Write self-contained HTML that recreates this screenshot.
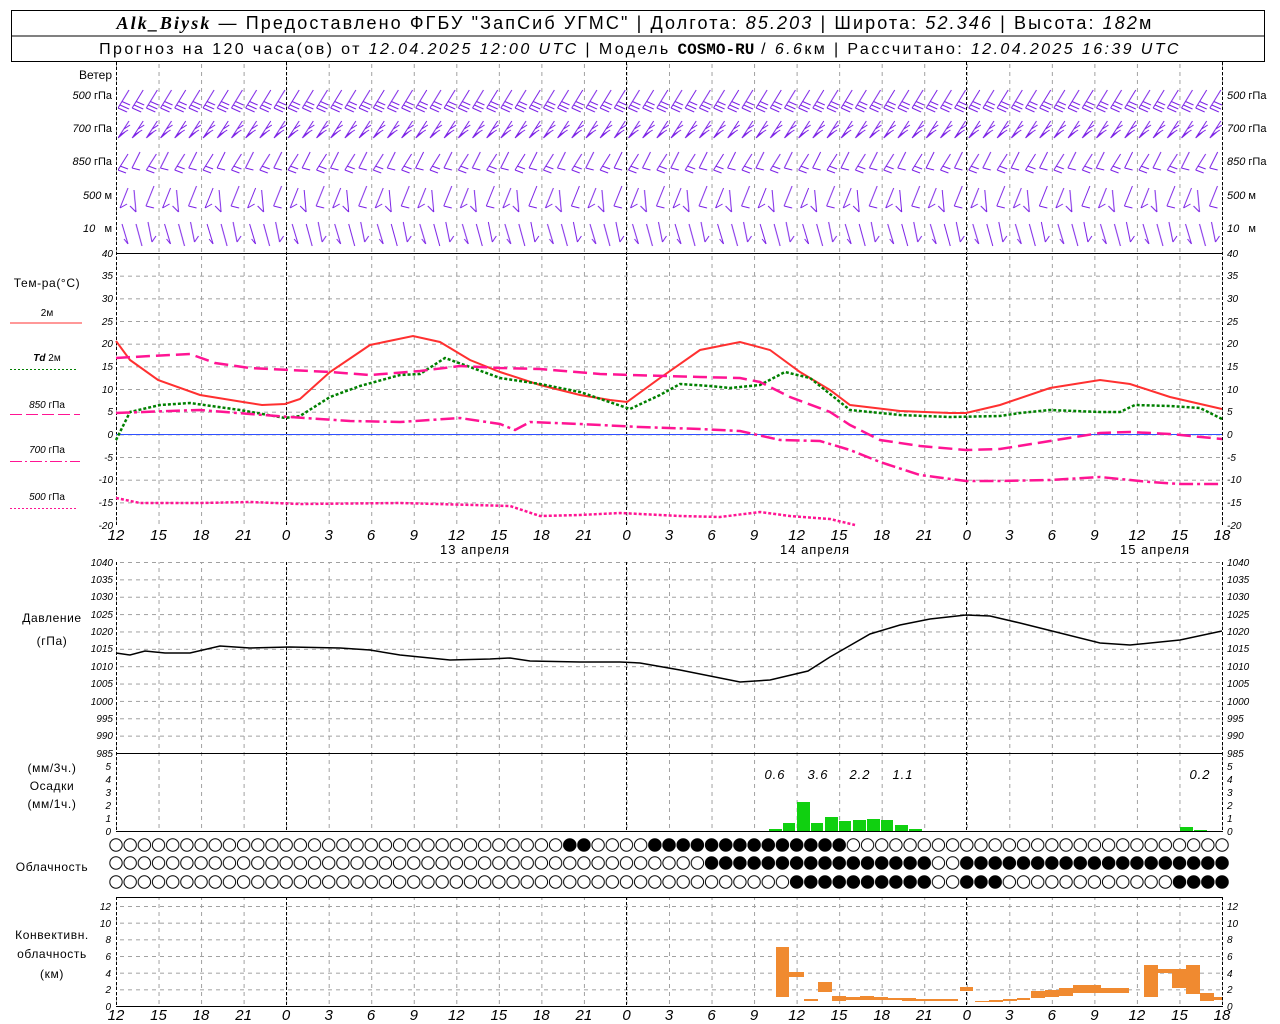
<!DOCTYPE html>
<html><head><meta charset="utf-8"><style>
html,body{margin:0;padding:0;background:#fff;width:1280px;height:1024px;overflow:hidden}
svg{display:block}
text{font-family:"Liberation Sans",sans-serif;fill:#000}
.ax{font-size:10px;font-style:italic}
.xl{font-size:15px;font-style:italic}
.lb{font-size:12px;letter-spacing:0.6px}
</style></head><body>
<svg width="1280" height="1024" viewBox="0 0 1280 1024" xmlns="http://www.w3.org/2000/svg">
<defs>
<pattern id="vg" x="116" y="0" width="42.538" height="8" patternUnits="userSpaceOnUse"><line x1="0.5" y1="0" x2="0.5" y2="4" stroke="#a0a0a0"/></pattern>
<pattern id="ht" x="0" y="253" width="8" height="22.67" patternUnits="userSpaceOnUse"><line x1="0" y1="0.5" x2="4" y2="0.5" stroke="#a0a0a0"/></pattern>
<pattern id="hp" x="0" y="562" width="8" height="17.364" patternUnits="userSpaceOnUse"><line x1="0" y1="0.5" x2="4" y2="0.5" stroke="#a0a0a0"/></pattern>
<pattern id="hc" x="0" y="906" width="8" height="16.667" patternUnits="userSpaceOnUse"><line x1="0" y1="0.5" x2="4" y2="0.5" stroke="#a0a0a0"/></pattern>
<pattern id="cw" x="108.91" y="0" width="14.18" height="20" patternUnits="userSpaceOnUse"><circle cx="7.09" cy="10" r="6.2" fill="#fff" stroke="#000" stroke-width="1"/></pattern>
<pattern id="cb" x="108.91" y="0" width="14.18" height="20" patternUnits="userSpaceOnUse"><circle cx="7.09" cy="10" r="6.5" fill="#000"/></pattern>
<pattern id="w1" x="116" y="88" width="14.18" height="30" patternUnits="userSpaceOnUse"><path d="M2,20 L13,2 M2,20 l9,4 M4,17 l9,4 M6,13.5 l8,3.5" stroke="#7a1fe6" fill="none" stroke-width="1"/></pattern>
<pattern id="w2" x="116" y="118" width="14.18" height="30" patternUnits="userSpaceOnUse"><path d="M2,20 L13,3 M2,20 l7,-6 M4,17 l8,-5 M8,11 l6,-4" stroke="#7a1fe6" fill="none" stroke-width="1"/></pattern>
<pattern id="w3" x="116" y="148" width="28.36" height="30" patternUnits="userSpaceOnUse"><path d="M2,22 L12,6 M2,22 l8,3 M4,18 l8,3 M16,20 L24,4 M16,20 l8,2" stroke="#7a1fe6" fill="none" stroke-width="1"/></pattern>
<pattern id="w4" x="116" y="180" width="42.54" height="40" patternUnits="userSpaceOnUse"><path d="M4,28 L12,8 M4,28 l7,-4 M18,10 L20,32 M20,32 l-6,-6 M30,26 L38,6 M30,26 l8,2" stroke="#7a1fe6" fill="none" stroke-width="1"/></pattern>
<pattern id="w5" x="116" y="220" width="42.54" height="30" patternUnits="userSpaceOnUse"><path d="M6,4 L12,24 M12,24 l-4,-5 M20,4 L26,26 M32,2 L36,22 M36,22 l4,-6" stroke="#7a1fe6" fill="none" stroke-width="1"/></pattern>
</defs>

<!-- Header -->
<rect x="11.5" y="10.5" width="1253" height="51" fill="none" stroke="#000"/>
<line x1="11" y1="36" x2="1265" y2="36" stroke="#000"/>
<text x="635" y="29" text-anchor="middle" style="font-size:18px;letter-spacing:2.1px"><tspan style="font-family:'Liberation Serif',serif;font-style:italic;font-weight:bold">Alk_Biysk</tspan> — Предоставлено ФГБУ "ЗапСиб УГМС" | Долгота: <tspan font-style="italic">85.203</tspan> | Широта: <tspan font-style="italic">52.346</tspan> | Высота: <tspan font-style="italic">182</tspan>м</text>
<text x="640" y="54" text-anchor="middle" style="font-size:16px;letter-spacing:2.4px">Прогноз на 120 часа(ов) от <tspan font-style="italic">12.04.2025 12:00 UTC</tspan> | Модель <tspan style="font-family:'Liberation Mono',monospace;font-weight:bold;letter-spacing:0">COSMO-RU</tspan> / <tspan font-style="italic">6.6</tspan>км | Рассчитано: <tspan font-style="italic">12.04.2025 16:39 UTC</tspan></text>

<!-- grids -->
<rect x="116" y="62" width="1107" height="191" fill="url(#vg)"/>
<rect x="116" y="253" width="1107" height="272" fill="url(#vg)"/>
<rect x="116" y="253" width="1107" height="272" fill="url(#ht)"/>
<rect x="116" y="562" width="1107" height="191" fill="url(#vg)"/>
<rect x="116" y="562" width="1107" height="191" fill="url(#hp)"/>
<rect x="116" y="753" width="1107" height="78" fill="url(#vg)"/>
<rect x="116" y="897" width="1107" height="109" fill="url(#vg)"/>
<rect x="116" y="906" width="1107" height="100" fill="url(#hc)"/>
<g stroke="#000" stroke-dasharray="3,2">
<line x1="286.5" y1="62" x2="286.5" y2="525"/><line x1="626.5" y1="62" x2="626.5" y2="525"/><line x1="966.5" y1="62" x2="966.5" y2="525"/>
<line x1="286.5" y1="562" x2="286.5" y2="831"/><line x1="626.5" y1="562" x2="626.5" y2="831"/><line x1="966.5" y1="562" x2="966.5" y2="831"/>
<line x1="286.5" y1="897" x2="286.5" y2="1006"/><line x1="626.5" y1="897" x2="626.5" y2="1006"/><line x1="966.5" y1="897" x2="966.5" y2="1006"/>
<line x1="116.5" y1="62" x2="116.5" y2="525"/><line x1="1222.5" y1="62" x2="1222.5" y2="525"/>
<line x1="116.5" y1="562" x2="116.5" y2="831"/><line x1="1222.5" y1="562" x2="1222.5" y2="831"/>
<line x1="116.5" y1="897" x2="116.5" y2="1006"/><line x1="1222.5" y1="897" x2="1222.5" y2="1006"/>
</g>
<g stroke="#000">
<line x1="116" y1="253.5" x2="1223" y2="253.5"/>
<line x1="116" y1="753.5" x2="1223" y2="753.5"/>
<line x1="116" y1="831.5" x2="1223" y2="831.5"/>
<line x1="116" y1="897.5" x2="1223" y2="897.5"/>
<line x1="116" y1="1006.5" x2="1223" y2="1006.5"/>
</g>

<!-- wind -->
<rect x="118" y="88" width="1104" height="30" fill="url(#w1)"/>
<rect x="118" y="118" width="1104" height="30" fill="url(#w2)"/>
<rect x="118" y="148" width="1104" height="30" fill="url(#w3)"/>
<rect x="118" y="180" width="1104" height="40" fill="url(#w4)"/>
<rect x="118" y="220" width="1104" height="30" fill="url(#w5)"/>
<g class="ax" style="font-size:11px">
<text x="112" y="79" text-anchor="end" style="font-size:12px;font-style:normal">Ветер</text>
<text x="112" y="99" text-anchor="end">500 <tspan font-style="normal">гПа</tspan></text>
<text x="112" y="132" text-anchor="end">700 <tspan font-style="normal">гПа</tspan></text>
<text x="112" y="165" text-anchor="end">850 <tspan font-style="normal">гПа</tspan></text>
<text x="112" y="199" text-anchor="end">500 <tspan font-style="normal">м</tspan></text>
<text x="112" y="232" text-anchor="end">10 &#160; <tspan font-style="normal">м</tspan></text>
<text x="1227" y="99">500 <tspan font-style="normal">гПа</tspan></text>
<text x="1227" y="132">700 <tspan font-style="normal">гПа</tspan></text>
<text x="1227" y="165">850 <tspan font-style="normal">гПа</tspan></text>
<text x="1227" y="199">500 <tspan font-style="normal">м</tspan></text>
<text x="1227" y="232">10 &#160; <tspan font-style="normal">м</tspan></text>
</g>

<!-- temperature -->
<line x1="116" y1="434.5" x2="1222" y2="434.5" stroke="#3050ff"/>
<polyline fill="none" stroke="#ff3030" stroke-width="2" points="116,341 130,360 158,380 200,395 243,402 262,405 285,404 300,399 330,372 370,345 413,336 440,342 470,360 500,372 540,385 580,395 610,400 627,402 660,378 700,350 740,342 770,350 800,372 830,390 850,405 900,411 950,413 966,413 1000,405 1050,388 1100,380 1130,384 1170,397 1222,409"/>
<polyline fill="none" stroke="#008000" stroke-width="2.5" stroke-dasharray="3,2" points="116,440 130,412 160,405 190,403 240,410 285,418 300,416 330,397 360,386 400,375 420,374 445,358 470,367 500,378 540,384 580,392 630,409 660,395 680,384 710,386 730,388 760,385 785,372 810,378 850,410 900,415 950,417 1000,416 1020,413 1050,410 1100,412 1120,412 1135,405 1170,406 1200,408 1222,419"/>
<polyline fill="none" stroke="#ff1493" stroke-width="2.5" stroke-dasharray="14,6" points="116,358 150,356 190,354 215,363 250,368 290,370 330,372 370,375 420,371 460,366 500,368 540,369 600,374 630,375 700,377 740,378 760,382 790,397 830,412 850,425 880,440 920,446 966,450 1000,449 1050,441 1100,433 1130,432 1170,434 1222,439"/>
<polyline fill="none" stroke="#ff1493" stroke-width="2.5" stroke-dasharray="14,4,3,4" points="116,413 170,411 200,410 250,414 290,417 350,421 400,422 460,418 500,424 515,430 530,422 580,424 640,427 700,429 740,431 780,440 820,441 850,450 880,462 920,475 966,481 1000,481 1050,480 1100,477 1150,482 1180,484 1222,484"/>
<polyline fill="none" stroke="#ff1493" stroke-width="2.5" stroke-dasharray="3,2" points="116,498 140,503 200,503 250,502 300,504 400,503 510,506 540,516 580,515 620,513 680,516 720,517 760,512 790,516 830,519 855,525"/>
<g class="ax">
<text x="113" y="257" text-anchor="end">40</text><text x="113" y="279" text-anchor="end">35</text><text x="113" y="302" text-anchor="end">30</text><text x="113" y="325" text-anchor="end">25</text><text x="113" y="347" text-anchor="end">20</text><text x="113" y="370" text-anchor="end">15</text><text x="113" y="393" text-anchor="end">10</text><text x="113" y="415" text-anchor="end">5</text><text x="113" y="438" text-anchor="end">0</text><text x="113" y="461" text-anchor="end">-5</text><text x="113" y="483" text-anchor="end">-10</text><text x="113" y="506" text-anchor="end">-15</text><text x="113" y="529" text-anchor="end">-20</text>
<text x="1227" y="257">40</text><text x="1227" y="279">35</text><text x="1227" y="302">30</text><text x="1227" y="325">25</text><text x="1227" y="347">20</text><text x="1227" y="370">15</text><text x="1227" y="393">10</text><text x="1227" y="415">5</text><text x="1227" y="438">0</text><text x="1227" y="461">-5</text><text x="1227" y="483">-10</text><text x="1227" y="506">-15</text><text x="1227" y="529">-20</text>
</g>
<text x="47" y="287" text-anchor="middle" class="lb">Тем-ра(°С)</text>
<text x="47" y="316" text-anchor="middle" style="font-size:10px">2м</text>
<line x1="10" y1="323" x2="82" y2="323" stroke="#ff3030"/>
<text x="47" y="361" text-anchor="middle" style="font-size:10px"><tspan font-style="italic" font-weight="bold">Td</tspan>  2м</text>
<line x1="10" y1="369.5" x2="78" y2="369.5" stroke="#008000" stroke-dasharray="2,2"/>
<text x="47" y="408" text-anchor="middle" style="font-size:10px"><tspan font-style="italic">850</tspan> гПа</text>
<line x1="10" y1="414.5" x2="80" y2="414.5" stroke="#ff1493" stroke-dasharray="12,4"/>
<text x="47" y="453" text-anchor="middle" style="font-size:10px"><tspan font-style="italic">700</tspan> гПа</text>
<line x1="10" y1="461.5" x2="80" y2="461.5" stroke="#ff1493" stroke-dasharray="12,3,2,3"/>
<text x="47" y="500" text-anchor="middle" style="font-size:10px"><tspan font-style="italic">500</tspan> гПа</text>
<line x1="10" y1="508.5" x2="78" y2="508.5" stroke="#ff1493" stroke-dasharray="2,2"/>

<!-- x labels top -->
<g class="xl" text-anchor="middle">
<text x="116" y="540">12</text><text x="158.5" y="540">15</text><text x="201" y="540">18</text><text x="243.6" y="540">21</text><text x="286" y="540">0</text><text x="328.7" y="540">3</text><text x="371" y="540">6</text><text x="413.8" y="540">9</text><text x="456.3" y="540">12</text><text x="498.8" y="540">15</text><text x="541.4" y="540">18</text><text x="583.9" y="540">21</text><text x="626.5" y="540">0</text><text x="669" y="540">3</text><text x="711.5" y="540">6</text><text x="754" y="540">9</text><text x="796.6" y="540">12</text><text x="839" y="540">15</text><text x="881.7" y="540">18</text><text x="924.2" y="540">21</text><text x="966.8" y="540">0</text><text x="1009.3" y="540">3</text><text x="1051.8" y="540">6</text><text x="1094.4" y="540">9</text><text x="1136.9" y="540">12</text><text x="1179.5" y="540">15</text><text x="1222" y="540">18</text>
</g>
<g style="font-size:13px;letter-spacing:1px" text-anchor="middle">
<text x="475" y="554">13 апреля</text><text x="815" y="554">14 апреля</text><text x="1155" y="554">15 апреля</text>
</g>

<!-- pressure -->
<polyline fill="none" stroke="#000" stroke-width="1.5" points="116,653 130,655 145,651 165,653 190,653 220,646 250,648 290,647 340,648 370,650 400,655 450,660 490,659 510,658 530,661 580,662 620,662 640,663 680,670 740,682 770,680 808,671 830,657 870,634 900,625 930,619 966,615 990,616 1020,623 1060,633 1100,643 1130,645 1180,640 1222,631"/>
<g class="ax">
<text x="113" y="566" text-anchor="end">1040</text><text x="113" y="583" text-anchor="end">1035</text><text x="113" y="600" text-anchor="end">1030</text><text x="113" y="618" text-anchor="end">1025</text><text x="113" y="635" text-anchor="end">1020</text><text x="113" y="652" text-anchor="end">1015</text><text x="113" y="670" text-anchor="end">1010</text><text x="113" y="687" text-anchor="end">1005</text><text x="113" y="705" text-anchor="end">1000</text><text x="113" y="722" text-anchor="end">995</text><text x="113" y="739" text-anchor="end">990</text><text x="113" y="757" text-anchor="end">985</text>
<text x="1227" y="566">1040</text><text x="1227" y="583">1035</text><text x="1227" y="600">1030</text><text x="1227" y="618">1025</text><text x="1227" y="635">1020</text><text x="1227" y="652">1015</text><text x="1227" y="670">1010</text><text x="1227" y="687">1005</text><text x="1227" y="705">1000</text><text x="1227" y="722">995</text><text x="1227" y="739">990</text><text x="1227" y="757">985</text>
</g>
<text x="52" y="622" text-anchor="middle" class="lb">Давление</text>
<text x="52" y="645" text-anchor="middle" class="lb">(гПа)</text>

<!-- precip -->
<g fill="#10d010">
<rect x="769" y="829" width="13" height="2"/><rect x="783" y="823" width="12" height="8"/><rect x="797" y="802" width="13" height="29"/><rect x="811" y="823" width="12" height="8"/><rect x="825" y="817" width="13" height="14"/><rect x="839" y="821" width="12" height="10"/><rect x="853" y="820" width="13" height="11"/><rect x="867" y="819" width="13" height="12"/><rect x="881" y="820" width="12" height="11"/><rect x="895" y="825" width="13" height="6"/><rect x="909" y="829" width="13" height="2"/>
<rect x="1180" y="827" width="13" height="4"/><rect x="1194" y="830" width="13" height="1"/>
</g>
<g style="font-size:13px;font-style:italic;letter-spacing:1px" text-anchor="middle">
<text x="775" y="779">0.6</text><text x="818" y="779">3.6</text><text x="860" y="779">2.2</text><text x="903" y="779">1.1</text><text x="1200" y="779">0.2</text>
</g>
<g class="ax">
<text x="111" y="770" text-anchor="end">5</text><text x="111" y="783" text-anchor="end">4</text><text x="111" y="796" text-anchor="end">3</text><text x="111" y="809" text-anchor="end">2</text><text x="111" y="822" text-anchor="end">1</text><text x="111" y="835" text-anchor="end">0</text>
<text x="1227" y="770">5</text><text x="1227" y="783">4</text><text x="1227" y="796">3</text><text x="1227" y="809">2</text><text x="1227" y="822">1</text><text x="1227" y="835">0</text>
</g>
<text x="52" y="772" text-anchor="middle" class="lb">(мм/3ч.)</text>
<text x="52" y="790" text-anchor="middle" class="lb">Осадки</text>
<text x="52" y="808" text-anchor="middle" class="lb">(мм/1ч.)</text>

<!-- clouds -->
<g transform="translate(0,835)">
<rect x="108.91" y="0" width="1120.2" height="20" fill="url(#cw)"/>
<rect x="562.67" y="0" width="28.36" height="20" fill="url(#cb)"/>
<rect x="647.75" y="0" width="198.5" height="20" fill="url(#cb)"/>
</g>
<g transform="translate(0,853)">
<rect x="108.91" y="0" width="1120.2" height="20" fill="url(#cw)"/>
<rect x="704.47" y="0" width="226.9" height="20" fill="url(#cb)"/>
<rect x="959.71" y="0" width="269.4" height="20" fill="url(#cb)"/>
</g>
<g transform="translate(0,872)">
<rect x="108.91" y="0" width="1120.2" height="20" fill="url(#cw)"/>
<rect x="789.55" y="0" width="141.8" height="20" fill="url(#cb)"/>
<rect x="959.71" y="0" width="42.54" height="20" fill="url(#cb)"/>
<rect x="1172.41" y="0" width="56.72" height="20" fill="url(#cb)"/>
</g>
<text x="52" y="871" text-anchor="middle" class="lb">Облачность</text>

<!-- convective -->
<g fill="#f08a30">
<rect x="776" y="947" width="13" height="50"/><rect x="789" y="972" width="15" height="5"/><rect x="804" y="999" width="14" height="2"/><rect x="818" y="982" width="14" height="10"/><rect x="832" y="996" width="14" height="5"/><rect x="846" y="997" width="14" height="3"/><rect x="860" y="996" width="14" height="4"/><rect x="874" y="997" width="14" height="3"/><rect x="888" y="998" width="14" height="2"/><rect x="902" y="998" width="14" height="3"/><rect x="916" y="999" width="14" height="2"/><rect x="930" y="999" width="14" height="2"/><rect x="944" y="999" width="14" height="2"/>
<rect x="960" y="987" width="13" height="4"/><rect x="975" y="1001" width="14" height="1"/><rect x="989" y="1000" width="14" height="2"/><rect x="1003" y="999" width="14" height="2"/><rect x="1017" y="998" width="13" height="2"/>
<rect x="1031" y="991" width="14" height="7"/><rect x="1045" y="990" width="14" height="7"/><rect x="1059" y="988" width="14" height="8"/><rect x="1073" y="985" width="14" height="8"/><rect x="1087" y="985" width="14" height="8"/><rect x="1101" y="988" width="14" height="5"/><rect x="1115" y="988" width="14" height="5"/>
<rect x="1144" y="965" width="14" height="32"/><rect x="1158" y="969" width="14" height="4"/><rect x="1172" y="969" width="14" height="19"/><rect x="1186" y="965" width="14" height="29"/><rect x="1200" y="993" width="14" height="8"/><rect x="1214" y="997" width="8" height="3"/>
</g>
<g class="ax">
<text x="111" y="910" text-anchor="end">12</text><text x="111" y="927" text-anchor="end">10</text><text x="111" y="943" text-anchor="end">8</text><text x="111" y="960" text-anchor="end">6</text><text x="111" y="977" text-anchor="end">4</text><text x="111" y="993" text-anchor="end">2</text><text x="111" y="1010" text-anchor="end">0</text>
<text x="1227" y="910">12</text><text x="1227" y="927">10</text><text x="1227" y="943">8</text><text x="1227" y="960">6</text><text x="1227" y="977">4</text><text x="1227" y="993">2</text><text x="1227" y="1010">0</text>
</g>
<text x="52" y="939" text-anchor="middle" class="lb">Конвективн.</text>
<text x="52" y="958" text-anchor="middle" class="lb">облачность</text>
<text x="52" y="978" text-anchor="middle" class="lb">(км)</text>
<g class="xl" text-anchor="middle">
<text x="116" y="1020">12</text><text x="158.5" y="1020">15</text><text x="201" y="1020">18</text><text x="243.6" y="1020">21</text><text x="286" y="1020">0</text><text x="328.7" y="1020">3</text><text x="371" y="1020">6</text><text x="413.8" y="1020">9</text><text x="456.3" y="1020">12</text><text x="498.8" y="1020">15</text><text x="541.4" y="1020">18</text><text x="583.9" y="1020">21</text><text x="626.5" y="1020">0</text><text x="669" y="1020">3</text><text x="711.5" y="1020">6</text><text x="754" y="1020">9</text><text x="796.6" y="1020">12</text><text x="839" y="1020">15</text><text x="881.7" y="1020">18</text><text x="924.2" y="1020">21</text><text x="966.8" y="1020">0</text><text x="1009.3" y="1020">3</text><text x="1051.8" y="1020">6</text><text x="1094.4" y="1020">9</text><text x="1136.9" y="1020">12</text><text x="1179.5" y="1020">15</text><text x="1222" y="1020">18</text>
</g>
</svg>
</body></html>
